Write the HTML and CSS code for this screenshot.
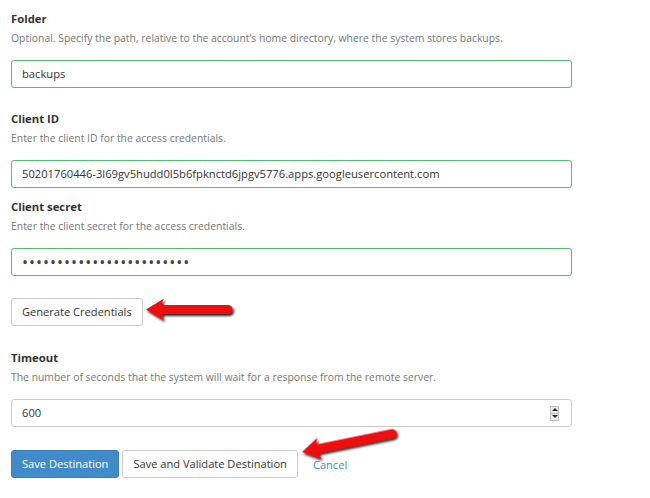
FILE: index.html
```html
<!DOCTYPE html>
<html>
<head>
<meta charset="utf-8">
<link rel="stylesheet" href="styles.css">
</head>
<body>
<form class="form">
  <div class="group g-folder">
    <div class="label">Folder</div>
    <div class="desc">Optional. Specify the path, relative to the account’s home directory, where the system stores backups.</div>
    <div class="input valid">backups</div>
  </div>
  <div class="group g-id">
    <div class="label">Client ID</div>
    <div class="desc">Enter the client ID for the access credentials.</div>
    <div class="input valid">50201760446-3l69gv5hudd0l5b6fpknctd6jpgv5776.apps.googleusercontent.com</div>
  </div>
  <div class="group g-secret">
    <div class="label">Client secret</div>
    <div class="desc">Enter the client secret for the access credentials.</div>
    <div class="input valid dots">••••••••••••••••••••••••</div>
  </div>
  <div class="group g-gen">
    <button type="button" class="btn">Generate Credentials</button>
  </div>
  <div class="group g-timeout">
    <div class="label">Timeout</div>
    <div class="desc">The number of seconds that the system will wait for a response from the remote server.</div>
    <div class="input number"><span>600</span><span class="spin"><span class="up"></span><span class="down"></span></span></div>
  </div>
  <div class="actions">
    <button type="button" class="btn primary">Save Destination</button>
    <button type="button" class="btn">Save and Validate Destination</button>
    <a class="cancel" href="#">Cancel</a>
  </div>
</form>
<svg class="arrows" width="650" height="498" viewBox="0 0 650 498">
  <defs>
    <filter id="sh" x="-20%" y="-50%" width="140%" height="200%">
      <feDropShadow dx="1.5" dy="2" stdDeviation="1.2" flood-color="#000" flood-opacity="0.85"/>
    </filter>
  </defs>
  <g filter="url(#sh)" fill="#f00d0d">
    <path transform="translate(146,309.5)" d="M0,0 L18,-11 Q15.5,-7 16.5,-4.5 L82,-4.5 A4.5,4.5 0 0 1 82,4.5 L16.5,4.5 Q15.5,7 18,11 Z"/>
    <path transform="translate(302,452) rotate(-11.5)" d="M0,0 L18,-11 Q15.5,-7 16.5,-4.5 L92,-4.5 A4.5,4.5 0 0 1 92,4.5 L16.5,4.5 Q15.5,7 18,11 Z"/>
  </g>
</svg>
</body>
</html>
```
FILE: styles.css
```css
html, body {
  margin: 0;
  padding: 0;
  background: #fff;
}
body {
  font-family: "Open Sans", "Liberation Sans", sans-serif;
  color: #333;
  width: 650px;
  height: 498px;
  overflow: hidden;
  position: relative;
}
.form {
  padding: 10px 0 0 11px;
  display: flex;
  flex-direction: column;
}
.label {
  font-size: 11.3px;
  font-weight: 700;
  line-height: 18px;
  color: #333;
}
.desc {
  font-size: 10.4px;
  line-height: 18px;
  color: #777;
  margin-top: 1px;
  margin-bottom: 13px;
}
.input {
  box-sizing: border-box;
  width: 561px;
  height: 28px;
  border: 1px solid #ccc;
  border-radius: 3px;
  padding: 0 10px;
  font-size: 11.2px;
  line-height: 26px;
  color: #333;
  white-space: nowrap;
  overflow: hidden;
}
.input.valid {
  border-color: #5cb87a;
  box-shadow: inset 0 1px 1px rgba(0,0,0,0.05);
}
.dots {
  font-size: 16px;
  letter-spacing: 1px;
  color: #444;
}
.g-folder { margin-bottom: 22px; }
.g-id { margin-bottom: 10px; }
.g-secret { margin-bottom: 22px; }
.g-gen { margin-bottom: 23px; }
.g-timeout { margin-bottom: 23px; }
.number {
  display: flex;
  align-items: center;
  justify-content: space-between;
  padding-right: 12px;
}
.spin {
  display: flex;
  flex-direction: column;
  width: 9px;
  height: 15px;
  border: 1px solid #bbb;
  background: #eee;
  box-sizing: border-box;
}
.spin .up, .spin .down {
  flex: 1;
  display: flex;
  align-items: center;
  justify-content: center;
}
.spin .up { border-bottom: 1px solid #bbb; }
.spin .up::after {
  content: "";
  border-left: 3px solid transparent;
  border-right: 3px solid transparent;
  border-bottom: 3px solid #222;
}
.spin .down::after {
  content: "";
  border-left: 3px solid transparent;
  border-right: 3px solid transparent;
  border-top: 3px solid #222;
}
.btn {
  font-family: "Open Sans", "Liberation Sans", sans-serif;
  font-size: 11.1px;
  height: 28px;
  padding: 0 10px;
  border: 1px solid #ccc;
  border-radius: 3px;
  background: #fff;
  color: #333;
  line-height: 26px;
  cursor: pointer;
}
.g-gen .btn { align-self: flex-start; }
.actions {
  display: flex;
  align-items: center;
  gap: 3px;
}
.btn.primary {
  background: #428bca;
  border-color: #3a7fbd;
  color: #fff;
}
.cancel {
  font-size: 11.1px;
  color: #428bca;
  text-decoration: none;
  margin-left: 12px;
}
.arrows {
  position: absolute;
  left: 0;
  top: 0;
  pointer-events: none;
}
```
